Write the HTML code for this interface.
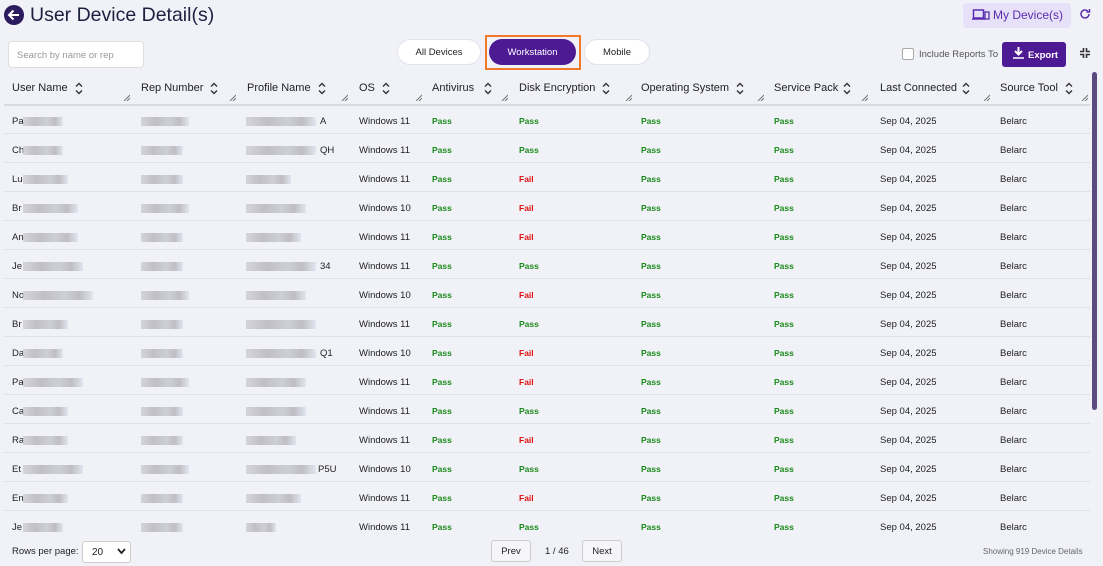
<!DOCTYPE html>
<html><head><style>
*{box-sizing:border-box;margin:0;padding:0}
body{width:1103px;height:566px;overflow:hidden;background:#f1f2f8;font-family:"Liberation Sans",sans-serif;position:relative;color:#222}
.a{position:absolute}
.h{font-size:11px;color:#222;top:82px}
.c{font-size:9.5px;position:absolute}
.p{color:#1a8a1a;font-weight:bold}
.f{color:#e01010;font-weight:bold}
.line{position:absolute;left:4px;width:1086px;height:1px;background:#dfe1e8}
.blur{position:absolute;height:9px;background:linear-gradient(90deg,#cfcfd6,#b9b6bd 30%,#c7c9d1 60%,#b7b4ba 80%,#dde3ee);opacity:.85}
.sort{position:absolute;top:82px}
.rs{position:absolute;top:94px}
</style></head><body>
<svg class="a" style="left:4px;top:5px" width="20" height="20" viewBox="0 0 20 20"><circle cx="10" cy="10" r="10" fill="#2a1a5e"/><path d="M15 10H5M9.5 5.5L5 10l4.5 4.5" stroke="#fff" stroke-width="2" fill="none"/></svg>
<div class="a" style="left:30px;top:4px;font-size:19.5px;color:#1e2040">User Device Detail(s)</div>
<div class="a" style="left:963px;top:3px;width:108px;height:25px;background:#e6e0f8;border-radius:4px;color:#5a2eb0;font-size:12px;padding:5px 0 0 30px">My Device(s)</div>
<svg class="a" style="left:972px;top:9px" width="18" height="12"><rect x="1.5" y="1" width="10" height="8" fill="none" stroke="#5a2eb0" stroke-width="1.5"/><line x1="0" y1="10" x2="13" y2="10" stroke="#5a2eb0" stroke-width="1.5"/><rect x="13" y="3" width="4" height="7" fill="none" stroke="#5a2eb0" stroke-width="1.3"/></svg>
<svg class="a" style="left:1079px;top:8px" width="12" height="12" viewBox="0 0 12 12"><path d="M10 6a4 4 0 1 1-1.2-2.9" fill="none" stroke="#5a2eb0" stroke-width="1.5"/><path d="M10.5 1v3h-3" fill="none" stroke="#5a2eb0" stroke-width="1.5"/></svg>
<div class="a" style="left:8px;top:41px;width:136px;height:27px;background:#fff;border:1px solid #ddd;border-radius:4px;font-size:9.5px;color:#999;padding:8px 0 0 8px">Search by name or rep</div>
<div class="a" style="left:397px;top:39px;width:84px;height:26px;background:#fff;border:1px solid #e2e2ea;border-radius:13px;font-size:9.5px;text-align:center;line-height:25px">All Devices</div>
<div class="a" style="left:485px;top:35px;width:96px;height:35px;border:2px solid #f07a2a"></div>
<div class="a" style="left:489px;top:39px;width:87px;height:26px;background:#4e1a94;border-radius:13px;font-size:9.5px;color:#fff;text-align:center;line-height:27px">Workstation</div>
<div class="a" style="left:584px;top:39px;width:66px;height:26px;background:#fff;border:1px solid #e2e2ea;border-radius:13px;font-size:9.5px;text-align:center;line-height:25px">Mobile</div>
<div class="a" style="left:902px;top:48px;width:12px;height:12px;border:1px solid #aaa;background:#fff;border-radius:2px"></div>
<div class="a" style="left:919px;top:49px;font-size:9.5px;color:#555">Include Reports To</div>
<div class="a" style="left:1002px;top:42px;width:64px;height:25px;background:#4e1a94;border-radius:3px;color:#fff;font-size:9.5px;font-weight:bold;padding:8px 0 0 26px">Export</div>
<svg class="a" style="left:1013px;top:47px" width="11" height="12"><path d="M5.5 0v7M2 4l3.5 3.5L9 4" stroke="#fff" stroke-width="2" fill="none"/><line x1="0" y1="11" x2="11" y2="11" stroke="#fff" stroke-width="1.5"/></svg>
<svg class="a" style="left:1080px;top:48px" width="10" height="10"><path d="M3.5 0v3.5H0M6.5 0v3.5H10M3.5 10V6.5H0M6.5 10V6.5H10" stroke="#333" stroke-width="1.6" fill="none"/></svg>
<div class="a" style="left:1092px;top:72px;width:5px;height:338px;background:#5b4a7d;border-radius:3px"></div>
<div class="line" style="top:104px;height:2px;background:#d9dbe2"></div>
<div id="t"></div>
<div class="a" style="left:12px;top:546px;font-size:9.5px">Rows per page:</div>
<div class="a" style="left:82px;top:541px;width:49px;height:22px;background:#fff;border:1px solid #ccc;border-radius:3px;font-size:10px;padding:5px 0 0 9px">20</div>
<svg class="a" style="left:117px;top:548px" width="9" height="7"><path d="M1 1l3.5 4L8 1" stroke="#222" stroke-width="1.8" fill="none"/></svg>
<div class="a" style="left:491px;top:540px;width:40px;height:22px;background:#f6f6fa;border:1px solid #ccc;border-radius:3px;font-size:9.5px;text-align:center;line-height:21px">Prev</div>
<div class="a" style="left:545px;top:546px;font-size:9.5px">1 / 46</div>
<div class="a" style="left:582px;top:540px;width:40px;height:22px;background:#f6f6fa;border:1px solid #ccc;border-radius:3px;font-size:9.5px;text-align:center;line-height:21px">Next</div>
<div class="a" style="left:983px;top:547px;font-size:8px;color:#666">Showing 919 Device Details</div>
<script>
var H=[["User Name",12,75,130],["Rep Number",141,210,236],["Profile Name",247,318,348],["OS",359,382,422],["Antivirus",432,484,508],["Disk Encryption",519,602,632],["Operating System",641,736,764],["Service Pack",774,843,868],["Last Connected",880,962,990],["Source Tool",1000,1065,1088]];
var s="";H.forEach(function(h){s+='<div class="a h" style="left:'+h[1]+'px">'+h[0]+'</div><svg class="sort" style="left:'+h[2]+'px" width="8" height="13"><path d="M1 4.5L4 1.5 7 4.5M1 8.5L4 11.5 7 8.5" stroke="#333" stroke-width="1.4" fill="none"/></svg><svg class="rs" style="left:'+(h[3]-7)+'px" width="7" height="7"><path d="M1 7L7 1M4 7L7 4" stroke="#777" stroke-width="1"/></svg>';});
var D=[["Pa","A",11,1],["Ch","QH",11,1],["Lu","",11,0],["Br","",10,0],["An","",11,0],["Je","34",11,1],["No","",10,0],["Br","",11,1],["Da","Q1",10,0],["Pa","",11,0],["Ca","",11,1],["Ra","",11,0],["Et","P5U",10,1],["En","",11,0],["Je","",11,1]];
var uw=[40,40,45,55,55,60,70,45,40,60,45,45,60,45,40],pw=[70,70,45,60,55,70,60,70,70,60,60,50,70,55,30];
D.forEach(function(d,i){var y=105+i*29,ty=y+11;
 s+='<div class="c" style="left:12px;top:'+ty+'px">'+d[0]+'</div><div class="blur" style="left:23px;top:'+(ty+1)+'px;width:'+uw[i]+'px"></div>';
 s+='<div class="blur" style="left:141px;top:'+(ty+1)+'px;width:'+(i%3==0?48:42)+'px"></div>';
 s+='<div class="blur" style="left:246px;top:'+(ty+1)+'px;width:'+pw[i]+'px"></div>';
 if(d[1])s+='<div class="c" style="left:'+(246+(d[1].length>2?72:74))+'px;top:'+ty+'px">'+d[1]+'</div>';
 s+='<div class="c" style="left:359px;top:'+ty+'px">Windows '+d[2]+'</div>';
 s+='<div class="c p" style="left:432px;top:'+ty+'px;font-size:8.5px">Pass</div>';
 s+='<div class="c '+(d[3]?'p':'f')+'" style="left:519px;top:'+ty+'px;font-size:8.5px">'+(d[3]?'Pass':'Fail')+'</div>';
 s+='<div class="c p" style="left:641px;top:'+ty+'px;font-size:8.5px">Pass</div>';
 s+='<div class="c p" style="left:774px;top:'+ty+'px;font-size:8.5px">Pass</div>';
 s+='<div class="c" style="left:880px;top:'+ty+'px">Sep 04, 2025</div>';
 s+='<div class="c" style="left:1000px;top:'+ty+'px">Belarc</div>';
 if(i<14)s+='<div class="line" style="top:'+(y+28)+'px"></div>';
});
document.getElementById("t").innerHTML=s;
</script>
</body></html>
